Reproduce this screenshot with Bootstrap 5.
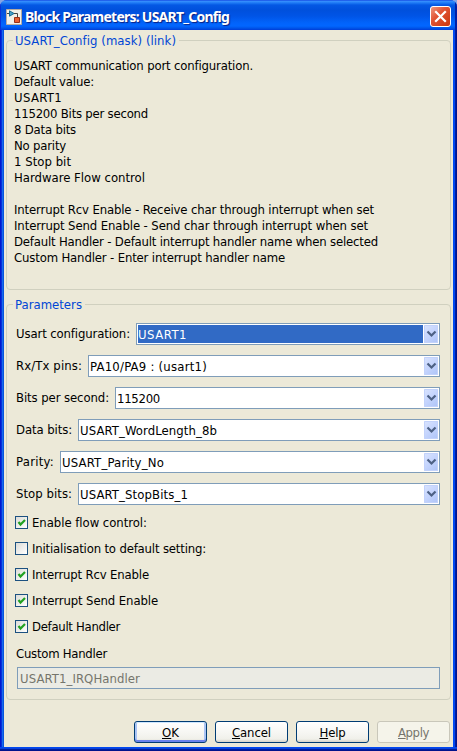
<!DOCTYPE html>
<html lang="en">
<head>
<meta charset="utf-8">
<title>Block Parameters: USART_Config</title>
<link rel="stylesheet" href="https://cdn.jsdelivr.net/npm/bootstrap@5.3.0/dist/css/bootstrap.min.css">
<style>
body{width:457px;height:751px;overflow:hidden;background:#86a5e4;font:13px/16px "DejaVu Sans Condensed","DejaVu Sans",sans-serif;font-stretch:condensed;color:#000}
.dialog-win{width:457px;height:751px;border-radius:7px 7px 0 0;background:linear-gradient(90deg,#0019cf 0 1px,#0831d9 1px 2px,#166aee 2px 3px,#0855dd 3px 4px,#0855dd 4px 453px,#0048f1 453px 455px,#001ea0 455px 456px,#00138c 456px);padding:0 4px;overflow:hidden}
.title-strip{height:30px;margin:0 -4px;padding:3px 6px 0;background:linear-gradient(#0831d9 0,#3a93ff 1px,#1c78f4 3px,#0458e4 5px,#0050dc 10px,#0054e6 16px,#0264fb 23px,#0266ff 26px,#0056ea 28px,#003dd7 30px);box-shadow:inset 1px 0 #0831d9,inset -2px 0 #0020a8}
.title-text{font:bold 14px/20px "Noto Sans","Open Sans",sans-serif;color:#fff;text-shadow:1px 1px 1px #0a1f80;margin-left:3px}
.client-area{height:717px;background:#ece9d8;padding:10px 2px 0}
.bottom-edge{height:4px;margin:0 -4px;background:linear-gradient(#0048f1 0 1px,#0842dd 1px 2px,#001ea0 2px 3px,#00138c 3px)}
.group-box{border:1px solid #d0d0bf;border-radius:4px;position:relative}
.group-title{position:absolute;top:-8px;left:6px;padding:0 3px 0 2px;background:#ece9d8;color:#0046d5}
.group-info{height:250px;padding:17px 7px}
.group-params{height:396px;margin-top:14px;padding:18px 10px 0 9px}
.t{display:inline-block;white-space:pre}
.combo-row{height:22px;margin-bottom:10px}
.combo-box{height:22px;background:#fff;border:1px solid #7f9db9;padding:1px}
.combo-value{height:18px;line-height:19px}
.combo-value.sel{background:#316ac5;color:#fff;margin-right:1px}
.combo-arrow{width:14px;height:18px;border-radius:1px;background:linear-gradient(135deg,#dae4fe,#c4d4fd 50%,#acc3f7);box-shadow:inset 0 0 0 1px #c2d2fb;flex:none}
.combo-arrow svg,.check-box svg{display:block}
.checks{margin-top:-5px}
.check-line{height:26px;margin-left:-1px}
.check-box{width:13px;height:13px;border:1px solid #1c5180;background:linear-gradient(135deg,#dcdcd7,#fff);margin:0 4px 1px 0;flex:none}
.custom-label{margin-top:6px;height:21px}
.field-off{height:22px;border:1px solid #7f9db9;background:#ebebe4;color:#75756c;line-height:21px;padding-left:2px;margin-left:1px}
.btn-line{margin:21px 1px 0 0}
.xp-btn{width:73px;height:22px;padding:0;border:1px solid #003c74;border-radius:3px;background:linear-gradient(#fff,#f5f5f1 60%,#f0f0ea 85%,#d9d5c9);font-size:13px;line-height:21px;color:#000}
.xp-btn.main-choice{box-shadow:inset 0 1px #cee7ff,inset 0 -2px #6982ee,inset 2px 0 #aac4f4,inset -2px 0 #aac4f4}
.xp-btn:disabled{opacity:1;color:#75756c;border-color:#c9c7ba;background:#f5f4ea}
</style>
<script src="https://cdn.jsdelivr.net/npm/bootstrap@5.3.0/dist/js/bootstrap.bundle.min.js"></script>
</head>
<body>
<main class="dialog-win">
<header class="title-strip d-flex align-items-center">
<svg width="16" height="16"><path fill="#f3f0e9" stroke="#b5aba0" d="M.5.5h15v15H.5z"/><path d="M1 4.5h2M8 4.5h3.5V8" fill="none" stroke="#444"/><path fill="#4aa0c8" stroke="#176d95" d="M3.5 1.8v5.4L8 4.5z"/><path fill="#e95f31" stroke="#993017" d="M8.5 8.5h5v5h-5z"/></svg>
<span class="title-text t" data-w="204">Block Parameters: USART_Config</span>
<svg class="ms-auto" width="21" height="21"><defs><linearGradient id="closeRed" x1="0" y1="0" x2="1" y2="1"><stop stop-color="#ee9a83"/><stop offset=".4" stop-color="#e25434"/><stop offset="1" stop-color="#c8350c"/></linearGradient></defs><rect x=".5" y=".5" width="20" height="20" rx="2.5" fill="url(#closeRed)" stroke="#fff"/><path d="m6 6 9 9m0-9-9 9" stroke="#fff" stroke-width="2.2" stroke-linecap="square"/></svg>
</header>
<div class="client-area">
<section class="group-box group-info">
<div class="group-title"><span class="t" data-w="161">USART_Config (mask) (link)</span></div>
<div class="d-flex flex-column align-items-start">
<span class="t" data-w="239">USART communication port configuration.</span>
<span class="t" data-w="80">Default value:</span>
<span class="t" data-w="48">USART1</span>
<span class="t" data-w="134">115200 Bits per second</span>
<span class="t" data-w="62">8 Data bits</span>
<span class="t" data-w="52">No parity</span>
<span class="t" data-w="57">1 Stop bit</span>
<span class="t" data-w="131">Hardware Flow control</span>
<span class="t">&nbsp;</span>
<span class="t" data-w="360">Interrupt Rcv Enable - Receive char through interrupt when set</span>
<span class="t" data-w="354">Interrupt Send Enable - Send char through interrupt when set</span>
<span class="t" data-w="364">Default Handler - Default interrupt handler name when selected</span>
<span class="t" data-w="271">Custom Handler - Enter interrupt handler name</span>
</div>
</section>
<section class="group-box group-params">
<div class="group-title"><span class="t" data-w="67">Parameters</span></div>
<div class="combo-row d-flex align-items-center"><span class="t" data-w="114" data-gap="120">Usart configuration:</span><div class="combo-box d-flex flex-fill"><div class="combo-value sel flex-fill"><span class="t" data-w="49">USART1</span></div><div class="combo-arrow"><svg width="14" height="18"><path d="m3.5 6.5 4 4 4-4" fill="none" stroke="#4d6185" stroke-width="2.2"/></svg></div></div></div>
<div class="combo-row d-flex align-items-center"><span class="t" data-w="66" data-gap="72">Rx/Tx pins:</span><div class="combo-box d-flex flex-fill"><div class="combo-value flex-fill"><span class="t" data-w="117">PA10/PA9 : (usart1)</span></div><div class="combo-arrow"><svg width="14" height="18"><path d="m3.5 6.5 4 4 4-4" fill="none" stroke="#4d6185" stroke-width="2.2"/></svg></div></div></div>
<div class="combo-row d-flex align-items-center"><span class="t" data-w="93" data-gap="99">Bits per second:</span><div class="combo-box d-flex flex-fill"><div class="combo-value flex-fill"><span class="t" data-w="43">115200</span></div><div class="combo-arrow"><svg width="14" height="18"><path d="m3.5 6.5 4 4 4-4" fill="none" stroke="#4d6185" stroke-width="2.2"/></svg></div></div></div>
<div class="combo-row d-flex align-items-center"><span class="t" data-w="56" data-gap="62">Data bits:</span><div class="combo-box d-flex flex-fill"><div class="combo-value flex-fill"><span class="t" data-w="137">USART_WordLength_8b</span></div><div class="combo-arrow"><svg width="14" height="18"><path d="m3.5 6.5 4 4 4-4" fill="none" stroke="#4d6185" stroke-width="2.2"/></svg></div></div></div>
<div class="combo-row d-flex align-items-center"><span class="t" data-w="38" data-gap="44">Parity:</span><div class="combo-box d-flex flex-fill"><div class="combo-value flex-fill"><span class="t" data-w="102">USART_Parity_No</span></div><div class="combo-arrow"><svg width="14" height="18"><path d="m3.5 6.5 4 4 4-4" fill="none" stroke="#4d6185" stroke-width="2.2"/></svg></div></div></div>
<div class="combo-row d-flex align-items-center"><span class="t" data-w="56" data-gap="62">Stop bits:</span><div class="combo-box d-flex flex-fill"><div class="combo-value flex-fill"><span class="t" data-w="108">USART_StopBits_1</span></div><div class="combo-arrow"><svg width="14" height="18"><path d="m3.5 6.5 4 4 4-4" fill="none" stroke="#4d6185" stroke-width="2.2"/></svg></div></div></div>
<div class="checks">
<div class="check-line d-flex align-items-center"><div class="check-box"><svg width="11" height="11"><path d="m2.5 5 2 2.5L9 3" fill="none" stroke="#21a121" stroke-width="2.2"/></svg></div><span class="t" data-w="115">Enable flow control:</span></div>
<div class="check-line d-flex align-items-center"><div class="check-box"></div><span class="t" data-w="174">Initialisation to default setting:</span></div>
<div class="check-line d-flex align-items-center"><div class="check-box"><svg width="11" height="11"><path d="m2.5 5 2 2.5L9 3" fill="none" stroke="#21a121" stroke-width="2.2"/></svg></div><span class="t" data-w="117">Interrupt Rcv Enable</span></div>
<div class="check-line d-flex align-items-center"><div class="check-box"><svg width="11" height="11"><path d="m2.5 5 2 2.5L9 3" fill="none" stroke="#21a121" stroke-width="2.2"/></svg></div><span class="t" data-w="126">Interrupt Send Enable</span></div>
<div class="check-line d-flex align-items-center"><div class="check-box"><svg width="11" height="11"><path d="m2.5 5 2 2.5L9 3" fill="none" stroke="#21a121" stroke-width="2.2"/></svg></div><span class="t" data-w="88">Default Handler</span></div>
</div>
<div class="custom-label"><span class="t" data-w="91">Custom Handler</span></div>
<div class="field-off"><span class="t" data-w="120">USART1_IRQHandler</span></div>
</section>
<footer class="btn-line d-flex justify-content-end gap-2">
<button class="btn xp-btn main-choice"><span class="t" data-w="17"><u>O</u>K</span></button>
<button class="btn xp-btn"><span class="t" data-w="39"><u>C</u>ancel</span></button>
<button class="btn xp-btn"><span class="t" data-w="26"><u>H</u>elp</span></button>
<button class="btn xp-btn" disabled><span class="t" data-w="31"><u>A</u>pply</span></button>
</footer>
</div>
<div class="bottom-edge"></div>
</main>
<script>
// Track each string so it takes up its nominal width in the dialog font.
document.querySelectorAll('.t[data-w]').forEach(function (el) {
  var n = el.textContent.length, w = el.getBoundingClientRect().width;
  el.style.letterSpacing = ((el.dataset.w - w) / n).toFixed(3) + 'px';
  if (el.dataset.gap) { el.style.flex = '0 0 ' + el.dataset.gap + 'px'; }
});
</script>
</body>
</html>
